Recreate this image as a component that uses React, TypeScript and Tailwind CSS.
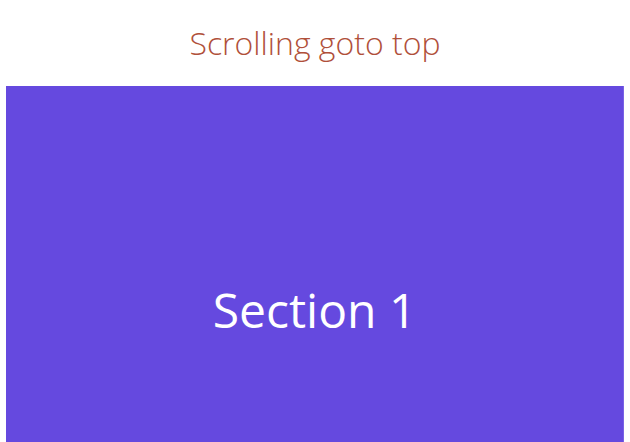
import React from "react";

export default function App() {
  return (
    <div className="w-[630px] h-[442px] overflow-hidden bg-white" style={{ fontFamily: '"Open Sans", sans-serif' }}>
      <div className="h-[86px] flex items-center justify-center">
        <h1 className="text-[32px] font-light text-[#b0503a] leading-none">Scrolling goto top</h1>
      </div>
      <div className="mx-[6px] h-[448px] bg-[#6549df] border-r border-[#7a62e4] flex items-center justify-center">
        <h2 className="text-[48px] font-normal text-white leading-none">Section 1</h2>
      </div>
    </div>
  );
}
